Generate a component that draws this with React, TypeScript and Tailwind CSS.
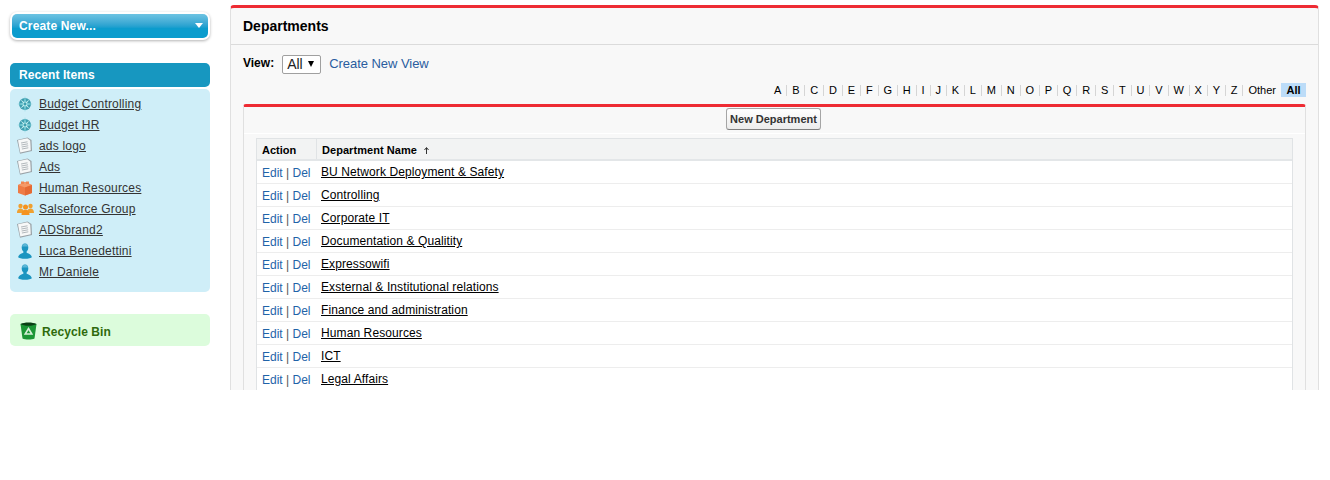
const recentItems = [
  { name: "Budget Controlling", icon: "compass" },
  { name: "Budget HR", icon: "compass" },
  { name: "ads logo", icon: "doc" },
  { name: "Ads", icon: "doc" },
  { name: "Human Resources", icon: "cube" },
  { name: "Salseforce Group", icon: "group" },
  { name: "ADSbrand2", icon: "doc" },
  { name: "Luca Benedettini", icon: "user" },
  { name: "Mr Daniele", icon: "user" },
];

const departments = [
  "BU Network Deployment & Safety",
  "Controlling",
  "Corporate IT",
  "Documentation & Qualitity",
  "Expressowifi",
  "Exsternal & Institutional relations",
  "Finance and administration",
  "Human Resources",
  "ICT",
  "Legal Affairs",
];

const letters = "ABCDEFGHIJKLMNOPQRSTUVWXYZ".split("");

function ItemIcon({ type }: { type: string }) {
  if (type === "compass") {
    return (
      <svg width="16" height="16" viewBox="0 0 16 16">
        <circle cx="8" cy="8" r="6" fill="#3f9fb0" />
        <path d="M8 0L9.2 6.8L16 8L9.2 9.2L8 16L6.8 9.2L0 8L6.8 6.8Z" fill="#7fd0d8" />
        <path d="M3.5 3.5L8 6.8L12.5 3.5L9.2 8L12.5 12.5L8 9.2L3.5 12.5L6.8 8Z" fill="#c9f0f0" />
        <circle cx="8" cy="8" r="1.4" fill="#3f9fb0" />
      </svg>
    );
  }
  if (type === "doc") {
    return (
      <svg width="15" height="17" viewBox="0 0 15 17">
        <path d="M0 3L10.5 0.5L14.5 3L15 14L3 16.8Z" fill="#9aa2a7" />
        <path d="M1 3.3L10.3 1.2L13.2 3.6L13.8 13.2L3.3 15.4Z" fill="#f7f8f8" />
        <path d="M4 6L10.5 4.8M4.3 8L11 6.8M4.6 10L11.2 8.8M4.9 12L11.3 10.8" stroke="#a9b0b4" strokeWidth="0.9" />
      </svg>
    );
  }
  if (type === "cube") {
    return (
      <svg width="16" height="16" viewBox="0 0 16 16">
        <path d="M1 5L8 2L15 5V13L8 15.5L1 13Z" fill="#ee7b45" />
        <path d="M1 5L8 2L15 5L8 7.5Z" fill="#f59a68" />
        <path d="M8 7.5V15.5L15 13V5Z" fill="#e56a34" />
        <path d="M4 1.5H7V4H4ZM9 1.5H12V4H9Z" fill="#f08550" />
      </svg>
    );
  }
  if (type === "group") {
    return (
      <svg width="17" height="16" viewBox="0 0 17 16">
        <circle cx="3.5" cy="5" r="2.2" fill="#f0a030" />
        <circle cx="13.5" cy="5" r="2.2" fill="#f0a030" />
        <path d="M0 12C0 8.5 2 7.5 3.5 7.5S7 8.5 7 12ZM10 12C10 8.5 12 7.5 13.5 7.5S17 8.5 17 12Z" fill="#f0a030" />
        <circle cx="8.5" cy="6" r="2.5" fill="#f5931f" />
        <path d="M4.5 14C4.5 10 6.5 8.7 8.5 8.7S12.5 10 12.5 14Z" fill="#f5931f" />
      </svg>
    );
  }
  return (
    <svg width="16" height="16" viewBox="0 0 16 16">
      <path d="M8 0.5C5.6 0.5 4.7 2.4 4.7 4.4C4.7 6.2 5.5 7.7 6.4 8.4V9.5C6.4 10.2 1.8 10.7 1.2 14C1.4 15.2 5 15.8 8 15.8S14.6 15.2 14.8 14C14.2 10.7 9.6 10.2 9.6 9.5V8.4C10.5 7.7 11.3 6.2 11.3 4.4C11.3 2.4 10.4 0.5 8 0.5Z" fill="#1b95c0" />
      <path d="M8 0.8C6.3 0.8 5.4 1.8 5 3.5H11C10.6 1.8 9.7 0.8 8 0.8Z" fill="#5bb6d6" />
    </svg>
  );
}

export default function App() {
  return (
    <div className="flex h-[390px] overflow-hidden bg-white font-['Liberation_Sans',Arial,sans-serif] text-[12px] text-[#222]">
      {/* Sidebar */}
      <aside className="ml-[10px] mt-[12px] w-[200px] shrink-0">
        <div className="rounded-[7px] bg-white p-[2px] shadow-[0_1px_3px_rgba(0,0,0,0.3)]">
          <div className="flex h-[24px] items-center justify-between rounded-[5px] bg-gradient-to-b from-[#6cc3e2] to-[#0b9ccd] to-60% pb-px pl-[7px] pr-[5px] text-[12px] font-bold tracking-[0.15px] text-white">
            <span>Create New...</span>
            <span className="h-0 w-0 border-x-[4px] border-t-[5px] border-x-transparent border-t-white" />
          </div>
        </div>

        <div className="mt-[23px] flex h-[24px] items-center rounded-[5px] bg-[#1797c0] pl-[9px] font-bold tracking-[0.08px] text-white">
          Recent Items
        </div>
        <ul className="mt-[2px] h-[203px] rounded-[5px] bg-[#cfeef8] pt-[4px]">
          {recentItems.map((item) => (
            <li key={item.name} className="flex h-[21px] items-center pl-[7px]">
              <span className="flex w-[22px] shrink-0">
                <ItemIcon type={item.icon} />
              </span>
              <a href="#" className="tracking-[0.2px] text-[#333] underline">
                {item.name}
              </a>
            </li>
          ))}
        </ul>

        <div className="mt-[22px] flex h-[32px] items-center rounded-[5px] bg-[#dcfcdc] pl-[10px] font-bold tracking-[0.08px] text-[#2f6a0c]">
          <svg width="17" height="18" viewBox="0 0 17 18" className="mr-[5px] mt-px">
            <path d="M0.5 2H16.5L14.5 16.5C12 17.8 5 17.8 2.5 16.5Z" fill="#1c9636" />
            <path d="M0.5 2C4 0 13 0 16.5 2C13 4.4 4 4.4 0.5 2Z" fill="#0a3f14" />
            <path d="M8.5 6.5L11.8 12H5.2Z" fill="none" stroke="#d8efd8" strokeWidth="1.6" />
          </svg>
          <span className="pt-[3px]">Recycle Bin</span>
        </div>
      </aside>

      {/* Main panel */}
      <main className="ml-[20px] mt-[5px] h-[500px] w-[1089px] shrink-0 rounded-t-[4px] border-x border-t-[3px] border-x-[#e0e0e0] border-t-[#ee2b33] bg-[#f8f8f8]">
        <div className="flex h-[37px] items-center border-b border-[#dbdbdb] pl-[12px] text-[14px] font-bold text-black">
          Departments
        </div>

        <div className="flex h-[38px] items-center pl-[12px]">
          <span className="-mt-[2px] font-bold text-black">View:</span>
          <span className="ml-[8px] flex h-[19px] w-[39px] items-center rounded-[2px] border border-[#a0a0a0] bg-white pl-[4px] text-[14px] leading-none">
            All
            <span className="ml-[5px] h-0 w-0 border-x-[3.5px] border-t-[6px] border-x-transparent border-t-black" />
          </span>
          <a href="#" className="ml-[8px] text-[13px] tracking-[-0.04px] text-[#2a5d9f]">
            Create New View
          </a>
        </div>

        {/* Alphabet filter */}
        <div className="mr-[12px] flex h-[14px] justify-end text-[11px] leading-[14px] text-black">
          {letters.map((letter) => (
            <span key={letter} className="flex items-center">
              <span className="px-[4.9px]">{letter}</span>
              <span className="h-[11px] w-px bg-[#d5d5d5]" />
            </span>
          ))}
          <span className="ml-[5px] mr-[5px]">Other</span>
          <span className="w-[25px] bg-[#bcdcf8] text-center font-bold">All</span>
        </div>

        {/* Related list block */}
        <div className="mx-[12px] mt-[7px] rounded-t-[3px] border-x border-t-[3px] border-x-[#e0e0e0] border-t-[#ee2b33] bg-[#f8f8f8]">
          <div className="flex h-[27px] justify-center border-b border-white pr-[2px] pt-px">
            <button className="h-[22px] w-[95px] rounded-[3px] border border-[#a5a5a5] border-b-[#7f7f7f] bg-gradient-to-b from-white to-[#ececec] text-[11px] font-bold text-[#333]">
              New Department
            </button>
          </div>
          <div className="mx-[12px] mt-[4px] border border-[#e0e3e5] bg-white">
            <div className="flex h-[22px] items-center border-b-2 border-[#e3e6e8] bg-[#f2f3f3] text-[11px] font-bold text-black">
              <span className="flex h-full w-[60px] items-center border-r border-[#e0e3e5] pl-[5px] pt-[2px]">Action</span>
              <span className="flex items-center pl-[5px] pt-[2px] tracking-[0.05px]">
                Department Name
                <svg width="5" height="7" viewBox="0 0 5 7" className="ml-[7px]">
                  <path d="M2.5 7V1M0.5 3L2.5 0.5L4.5 3" fill="none" stroke="#333" strokeWidth="1" />
                </svg>
              </span>
            </div>
            {departments.map((dept) => (
              <div key={dept} className="flex h-[23px] items-center border-b border-[#ededed] pt-[2px]">
                <span className="w-[64px] shrink-0 pl-[5px] text-[#1f63a8]">
                  Edit <span className="text-[#555]">|</span> Del
                </span>
                <a href="#" className="-mt-[2px] tracking-[0.1px] text-black underline">
                  {dept}
                </a>
              </div>
            ))}
          </div>
        </div>
      </main>
    </div>
  );
}
